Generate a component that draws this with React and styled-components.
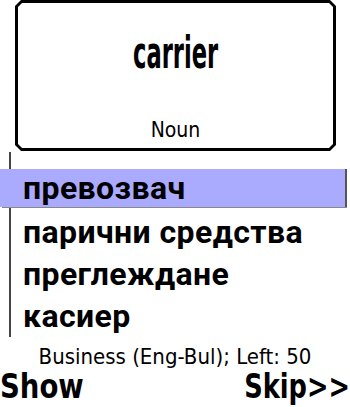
import React from 'react';
import styled, { createGlobalStyle } from 'styled-components';

const GlobalStyle = createGlobalStyle`
  html, body {
    margin: 0;
    padding: 0;
    background: #fff;
  }
  body {
    font-family: "DejaVu Sans Condensed", "DejaVu Sans", sans-serif;
    color: #000;
  }
`;

const Screen = styled.div`
  width: 350px;
  height: 407px;
  overflow: hidden;
  display: flex;
  flex-direction: column;
  background: #fff;
`;

const chamfer = (n) =>
  `polygon(${n}px 0, calc(100% - ${n}px) 0, 100% ${n}px, 100% calc(100% - ${n}px), calc(100% - ${n}px) 100%, ${n}px 100%, 0 calc(100% - ${n}px), 0 ${n}px)`;

const CardFrame = styled.div`
  margin-left: 15px;
  width: 321px;
  height: 151px;
  padding: 3px;
  box-sizing: border-box;
  background: #000;
  clip-path: ${chamfer(6)};
`;

const CardInner = styled.div`
  height: 100%;
  background: #fff;
  clip-path: ${chamfer(4)};
  display: flex;
  flex-direction: column;
  align-items: center;
`;

const Word = styled.div`
  margin-top: 25px;
  font-size: 44px;
  line-height: 50px;
  font-weight: bold;
  transform: scaleX(0.57);
`;

const PartOfSpeech = styled.div`
  margin-top: auto;
  margin-bottom: 6px;
  font-size: 21px;
  line-height: 24px;
`;

const List = styled.div`
  margin: 1px 0 0 9px;
  padding-top: 17px;
  border-left: 2px solid #444;
`;

const Row = styled.div`
  height: ${(p) => (p.$active ? '38px' : '42px')};
  margin-left: ${(p) => (p.$active ? '-11px' : '0')};
  margin-bottom: ${(p) => (p.$active ? '4px' : '0')};
  width: ${(p) => (p.$active ? '345px' : 'auto')};
  padding-left: ${(p) => (p.$active ? '23px' : '12px')};
  box-sizing: border-box;
  background: ${(p) => (p.$active ? '#aaaaff' : 'transparent')};
  box-shadow: ${(p) => (p.$active ? '2px 0 0 #555, 2px 1px 0 #888' : 'none')};
  font-family: Roboto, "DejaVu Sans", sans-serif;
  font-weight: bold;
  font-size: 32px;
  line-height: ${(p) => (p.$active ? '38px' : '42px')};
  letter-spacing: 0.4px;
  white-space: nowrap;
`;

const Status = styled.div`
  margin-top: 8px;
  text-align: center;
  font-size: 22px;
  line-height: 24px;
`;

const SoftKeys = styled.div`
  display: flex;
  justify-content: space-between;
  margin-top: 1px;
`;

const SoftKey = styled.span`
  display: inline-block;
  font-size: 34px;
  line-height: 32px;
  font-weight: bold;
  transform: scaleX(${(p) => p.$squeeze});
  transform-origin: ${(p) => (p.$right ? 'right' : 'left')} center;
`;

const translations = ['превозвач', 'парични средства', 'преглеждане', 'касиер'];

export default function App() {
  return (
    <Screen>
      <GlobalStyle />
      <CardFrame>
        <CardInner>
          <Word>carrier</Word>
          <PartOfSpeech>Noun</PartOfSpeech>
        </CardInner>
      </CardFrame>
      <List>
        {translations.map((t, i) => (
          <Row key={t} $active={i === 0}>
            {t}
          </Row>
        ))}
      </List>
      <Status>Business (Eng-Bul); Left: 50</Status>
      <SoftKeys>
        <SoftKey $squeeze={0.9}>Show</SoftKey>
        <SoftKey $squeeze={0.84} $right>
          Skip&gt;&gt;
        </SoftKey>
      </SoftKeys>
    </Screen>
  );
}
